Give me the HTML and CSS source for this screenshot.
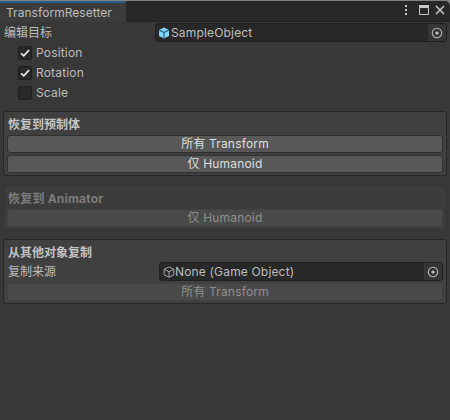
FILE: index.html
```html
<!DOCTYPE html>
<html lang="zh-CN">
<head>
<meta charset="utf-8">
<title>TransformResetter</title>
<link rel="stylesheet" href="styles.css">
</head>
<body>
<div class="window">
  <header class="titlebar">
    <div class="tab">TransformResetter</div>
    <div class="controls">
      <svg width="4" height="12" viewBox="0 0 4 12" fill="#c8c8c8"><rect x="1" y="1" width="2" height="2"/><rect x="1" y="5" width="2" height="2"/><rect x="1" y="9" width="2" height="2"/></svg>
      <svg class="maximize" width="10" height="10" viewBox="0 0 10 10"><path d="M.5 1v8.5h9V1" fill="none" stroke="#c8c8c8"/><path d="M0 0h10v3H0z" fill="#c8c8c8"/></svg>
      <svg class="close" width="10" height="10" viewBox="0 0 10 10"><path d="M1 1l8 8M9 1L1 9" stroke="#c8c8c8" stroke-width="1.5"/></svg>
    </div>
  </header>
  <main>
    <div class="row target">
      <span class="label">编辑目标</span>
      <div class="field">
        <svg class="cube" width="12" height="12" viewBox="0 0 12 12"><path d="M6 .5l5 2.4v6.2l-5 2.5-5-2.5V2.9z" fill="#80d6fd"/><path d="M1.3 3.2L6 5.5l4.7-2.3M6 5.5v6" fill="none" stroke="#25536a" stroke-width="1.1"/></svg>
        <span class="value sample">SampleObject</span>
        <span class="picker"><svg width="12" height="12" viewBox="0 0 12 12"><circle cx="6" cy="6" r="4.7" fill="none" stroke="#b4b4b4" stroke-width="1.1"/><circle cx="6" cy="6" r="1.6" fill="#c4c4c4"/></svg></span>
      </div>
    </div>
    <div class="checks">
      <div class="check"><span class="box"><svg width="12" height="12" viewBox="0 0 12 12"><path d="M2.1 6.3l2.7 2.5L10 3.1" fill="none" stroke="#e6e6e6" stroke-width="1.8"/></svg></span><span>Position</span></div>
      <div class="check"><span class="box"><svg width="12" height="12" viewBox="0 0 12 12"><path d="M2.1 6.3l2.7 2.5L10 3.1" fill="none" stroke="#e6e6e6" stroke-width="1.8"/></svg></span><span>Rotation</span></div>
      <div class="check"><span class="box"></span><span>Scale</span></div>
    </div>
    <section class="group">
      <h2>恢复到预制体</h2>
      <div class="button">所有 Transform</div>
      <div class="button">仅 Humanoid</div>
    </section>
    <section class="group disabled">
      <h2>恢复到 Animator</h2>
      <div class="button off">仅 Humanoid</div>
    </section>
    <section class="group">
      <h2>从其他对象复制</h2>
      <div class="row source">
        <span class="label">复制来源</span>
        <div class="field">
          <svg class="cube" width="12" height="12" viewBox="0 0 12 12"><path d="M6 .9l4.8 2.4v5.6L6 11.2 1.2 8.9V3.3zM1.2 3.3L6 5.7l4.8-2.4M6 5.7v5.5" fill="none" stroke="#a6a6a6"/></svg>
          <span class="value none">None (Game Object)</span>
          <span class="picker"><svg width="12" height="12" viewBox="0 0 12 12"><circle cx="6" cy="6" r="4.7" fill="none" stroke="#b4b4b4" stroke-width="1.1"/><circle cx="6" cy="6" r="1.6" fill="#c4c4c4"/></svg></span>
        </div>
      </div>
      <div class="button off">所有 Transform</div>
    </section>
  </main>
</div>
</body>
</html>
```

FILE: styles.css
```css
* { box-sizing: border-box; }
body {
  margin: 0;
  background: #808382;
  color: #bdbdbd;
  font: 12px/18px Inter, "Noto Sans CJK SC", sans-serif;
  letter-spacing: .17px;
  white-space: nowrap;
}
svg { display: block; flex: none; }
.window {
  height: 420px;
  padding-top: 1px;
}
.titlebar {
  display: flex;
  justify-content: space-between;
  height: 21px;
  background: #282828;
  border-bottom: 1px solid #232323;
  border-radius: 0 5px 0 0;
}
.tab {
  width: 126px;
  height: 21px;
  padding: 1px 0 0 6px;
  background: #3c3c3c;
  border-top: 2px solid #2c5d87;
  letter-spacing: .05px;
}
.controls {
  display: flex;
  align-items: center;
  padding: 0 5px 2px 0;
}
.maximize { margin-left: 11px; }
.close { margin-left: 6px; }
main {
  height: 398px;
  padding: 1px 3px 0;
  background: #383838;
}
.row { display: flex; align-items: center; }
.label { letter-spacing: 0; }
.target .label { width: 152px; padding-left: 1px; }
.field {
  display: flex;
  align-items: center;
  flex: 1;
  height: 19px;
  padding-left: 2px;
  background: #282828;
  border: 1px solid #202020;
  border-radius: 3px;
}
.value { margin-left: 1px; }
.source .field { padding-left: 3px; }
.source .value { margin-left: 0; }
.picker {
  display: flex;
  align-items: center;
  justify-content: center;
  width: 18px;
  height: 17px;
  margin-left: auto;
  background: #353535;
  border-radius: 0 2px 2px 0;
}
.checks { padding: 1px 0 0 15px; }
.check {
  display: flex;
  align-items: center;
  height: 20px;
  gap: 4px;
}
.box {
  display: flex;
  align-items: center;
  justify-content: center;
  width: 14px;
  height: 14px;
  background: #292929;
  border: 1px solid #202020;
  border-radius: 2px;
}
.group {
  margin-bottom: 9px;
  padding: 3px 3px 2px;
  background: #404040;
  border: 1px solid #272727;
  border-radius: 3px;
}
.checks + .group { margin-top: 8px; }
h2 {
  height: 20px;
  margin: 0;
  padding-left: 1px;
  font-size: 12px;
  font-weight: 700;
  line-height: 19px;
  letter-spacing: 0;
  color: #c4c4c4;
}
.button {
  height: 18px;
  margin-bottom: 2px;
  background: #585858;
  border: 1px solid #303030;
  border-radius: 3px;
  color: #dedede;
  line-height: 16px;
  text-align: center;
}
.button:last-child { margin-bottom: 0; }
.disabled { background: #3c3c3c; border-color: #323232; }
.disabled h2 { color: #7c7c7c; letter-spacing: .2px; }
.off {
  background: #4a4a4a;
  border-color: #414141;
  color: #8f8f8f;
}
.source { height: 19px; margin: -1px 0 2px; }
.source .label { width: 152px; padding-left: 1px; }
```
